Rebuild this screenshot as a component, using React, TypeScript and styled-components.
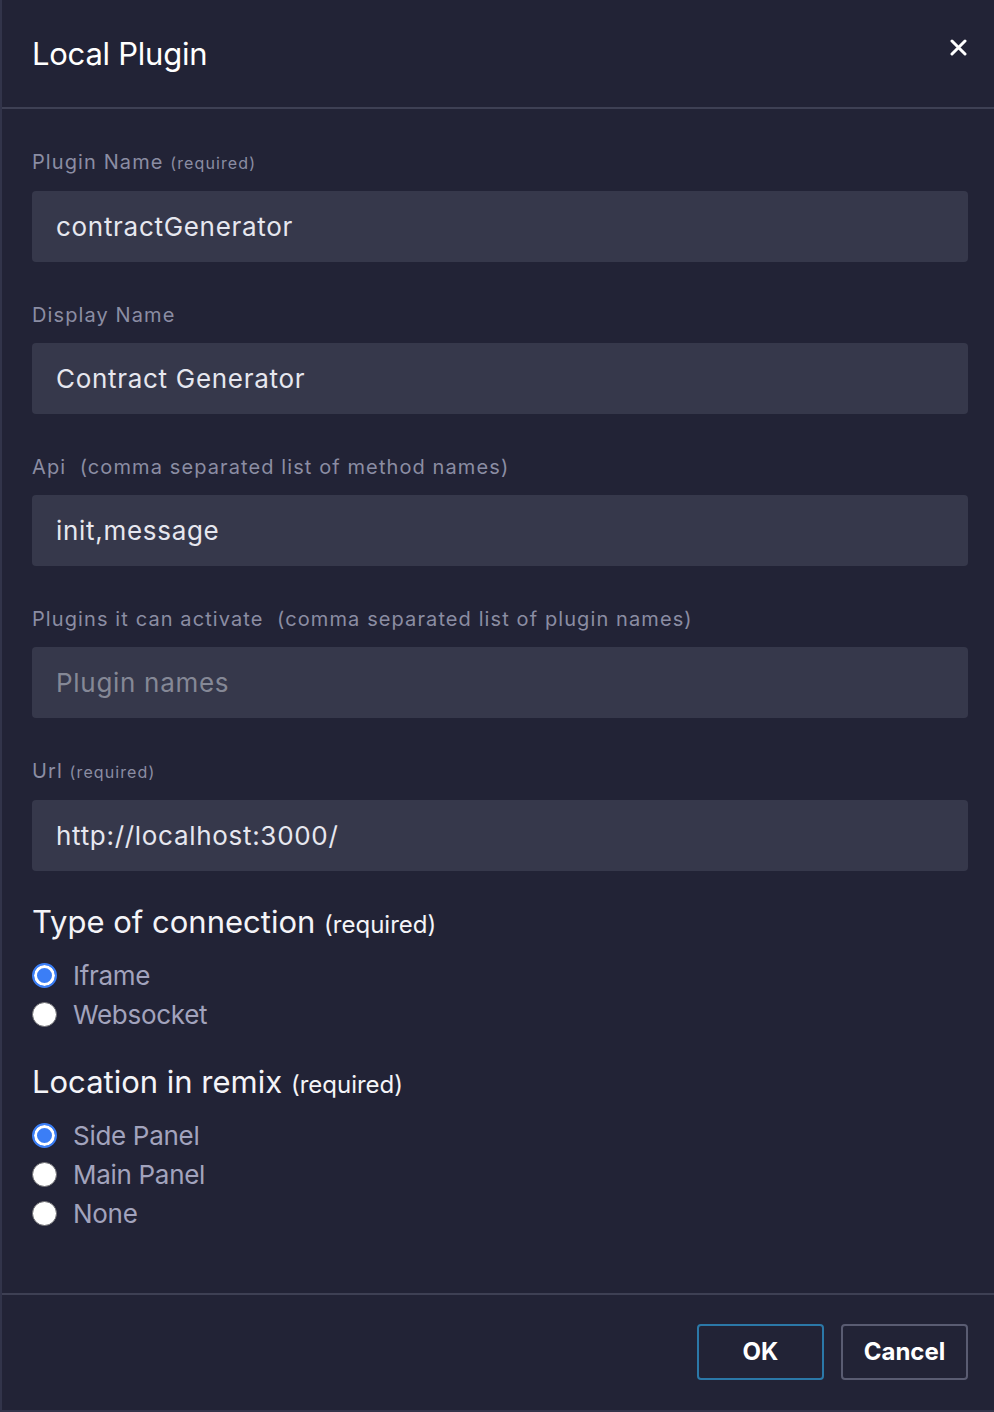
import React from 'react';
import styled, { createGlobalStyle } from 'styled-components';

const GlobalStyle = createGlobalStyle`
  html, body {
    margin: 0;
    padding: 0;
    background: #222336;
  }
  body {
    font-family: Inter, "Noto Sans", "Liberation Sans", sans-serif;
  }
  * {
    box-sizing: border-box;
  }
`;

const Modal = styled.div`
  width: 994px;
  height: 1412px;
  display: flex;
  flex-direction: column;
  background: #222336;
  border-left: 2px solid #32344a;
  border-bottom: 2px solid #32344a;
`;

const Header = styled.div`
  height: 109px;
  display: flex;
  align-items: center;
  justify-content: space-between;
  padding: 0 26px 0 30px;
  border-bottom: 2px solid #3e4054;
`;

const Title = styled.h1`
  margin: 0;
  font-size: 31px;
  letter-spacing: -0.25px;
  font-weight: 400;
  color: #ffffff;
`;

const CloseButton = styled.button`
  background: none;
  border: none;
  padding: 0;
  margin: 0 0 12px;
  width: 20px;
  height: 20px;
  display: flex;
  align-items: center;
  justify-content: center;
  cursor: pointer;
`;

const Body = styled.div`
  flex: 1;
  padding: 41px 26px 0 30px;
`;

const FieldList = styled.div`
  display: flex;
  flex-direction: column;
  gap: 41px;
`;

const Label = styled.label`
  display: block;
  font-size: 20px;
  line-height: 24px;
  letter-spacing: 1.1px;
  color: #8b8da3;
  margin-bottom: 16px;
`;

const Hint = styled.span<{ $size?: number }>`
  font-size: ${(p) => p.$size ?? 16}px;
`;

const Input = styled.input`
  display: block;
  width: 100%;
  height: 71px;
  padding: 0 24px;
  border: none;
  border-radius: 4px;
  background: #36384b;
  color: #e6e7ef;
  font-family: inherit;
  font-size: 26px;
  letter-spacing: 0.7px;
  outline: none;

  &::placeholder {
    color: #858896;
  }
`;

const Section = styled.div`
  margin-top: 32px;

  & + & {
    margin-top: 29px;
  }
`;

const SectionTitle = styled.h2`
  margin: 0 0 12px;
  font-size: 31px;
  line-height: 38px;
  font-weight: 400;
  color: #f4f4f8;
`;

const SectionHint = styled.span`
  font-size: 24px;
`;

const RadioRow = styled.label`
  display: flex;
  align-items: center;
  gap: 16px;
  height: 39px;
  font-size: 26px;
  letter-spacing: -0.3px;
  color: #a2a3bd;
  cursor: pointer;
`;

const Radio = styled.input.attrs({ type: 'radio' })`
  appearance: none;
  margin: 0;
  width: 25px;
  height: 25px;
  border-radius: 50%;
  background: #ffffff;
  border: 1px solid #6b6b70;
  flex-shrink: 0;

  &:checked {
    background: #3b7ef6;
    border: 2px solid #3b7ef6;
    box-shadow: inset 0 0 0 3px #ffffff;
  }
`;

const Footer = styled.div`
  height: 117px;
  border-top: 2px solid #3e4054;
  display: flex;
  align-items: center;
  justify-content: flex-end;
  gap: 17px;
  padding: 0 26px 2px 0;
`;

const Button = styled.button<{ $primary?: boolean }>`
  width: 127px;
  height: 56px;
  border-radius: 4px;
  background: transparent;
  border: 2px solid ${(p) => (p.$primary ? '#2b78a8' : '#5a5c72')};
  color: #ffffff;
  font-family: inherit;
  font-size: 24px;
  font-weight: 700;
  cursor: pointer;
`;

const fields = [
  { label: 'Plugin Name', hint: '(required)', value: 'contractGenerator' },
  { label: 'Display Name', value: 'Contract Generator' },
  { label: 'Api', hint: '\u00a0(comma separated list of method names)', hintSize: 20, value: 'init,message' },
  {
    label: 'Plugins it can activate',
    hint: '\u00a0(comma separated list of plugin names)',
    hintSize: 20,
    placeholder: 'Plugin names',
  },
  { label: 'Url', hint: '(required)', value: 'http://localhost:3000/' },
];

export default function App() {
  return (
    <>
      <GlobalStyle />
      <Modal>
        <Header>
          <Title>Local Plugin</Title>
          <CloseButton aria-label="Close">
            <svg width="17" height="17" viewBox="0 0 17 17">
              <path d="M2 2 L15 15 M15 2 L2 15" stroke="#ffffff" strokeWidth="3" strokeLinecap="round" />
            </svg>
          </CloseButton>
        </Header>
        <Body>
          <FieldList>
            {fields.map((f) => (
              <div key={f.label}>
                <Label>
                  {f.label} {f.hint && <Hint $size={f.hintSize}>{f.hint}</Hint>}
                </Label>
                <Input defaultValue={f.value} placeholder={f.placeholder} />
              </div>
            ))}
          </FieldList>
          <Section>
            <SectionTitle>
              Type of connection <SectionHint>(required)</SectionHint>
            </SectionTitle>
            <RadioRow>
              <Radio name="type" defaultChecked />
              Iframe
            </RadioRow>
            <RadioRow>
              <Radio name="type" />
              Websocket
            </RadioRow>
          </Section>
          <Section>
            <SectionTitle>
              Location in remix <SectionHint>(required)</SectionHint>
            </SectionTitle>
            <RadioRow>
              <Radio name="location" defaultChecked />
              Side Panel
            </RadioRow>
            <RadioRow>
              <Radio name="location" />
              Main Panel
            </RadioRow>
            <RadioRow>
              <Radio name="location" />
              None
            </RadioRow>
          </Section>
        </Body>
        <Footer>
          <Button $primary>OK</Button>
          <Button>Cancel</Button>
        </Footer>
      </Modal>
    </>
  );
}
